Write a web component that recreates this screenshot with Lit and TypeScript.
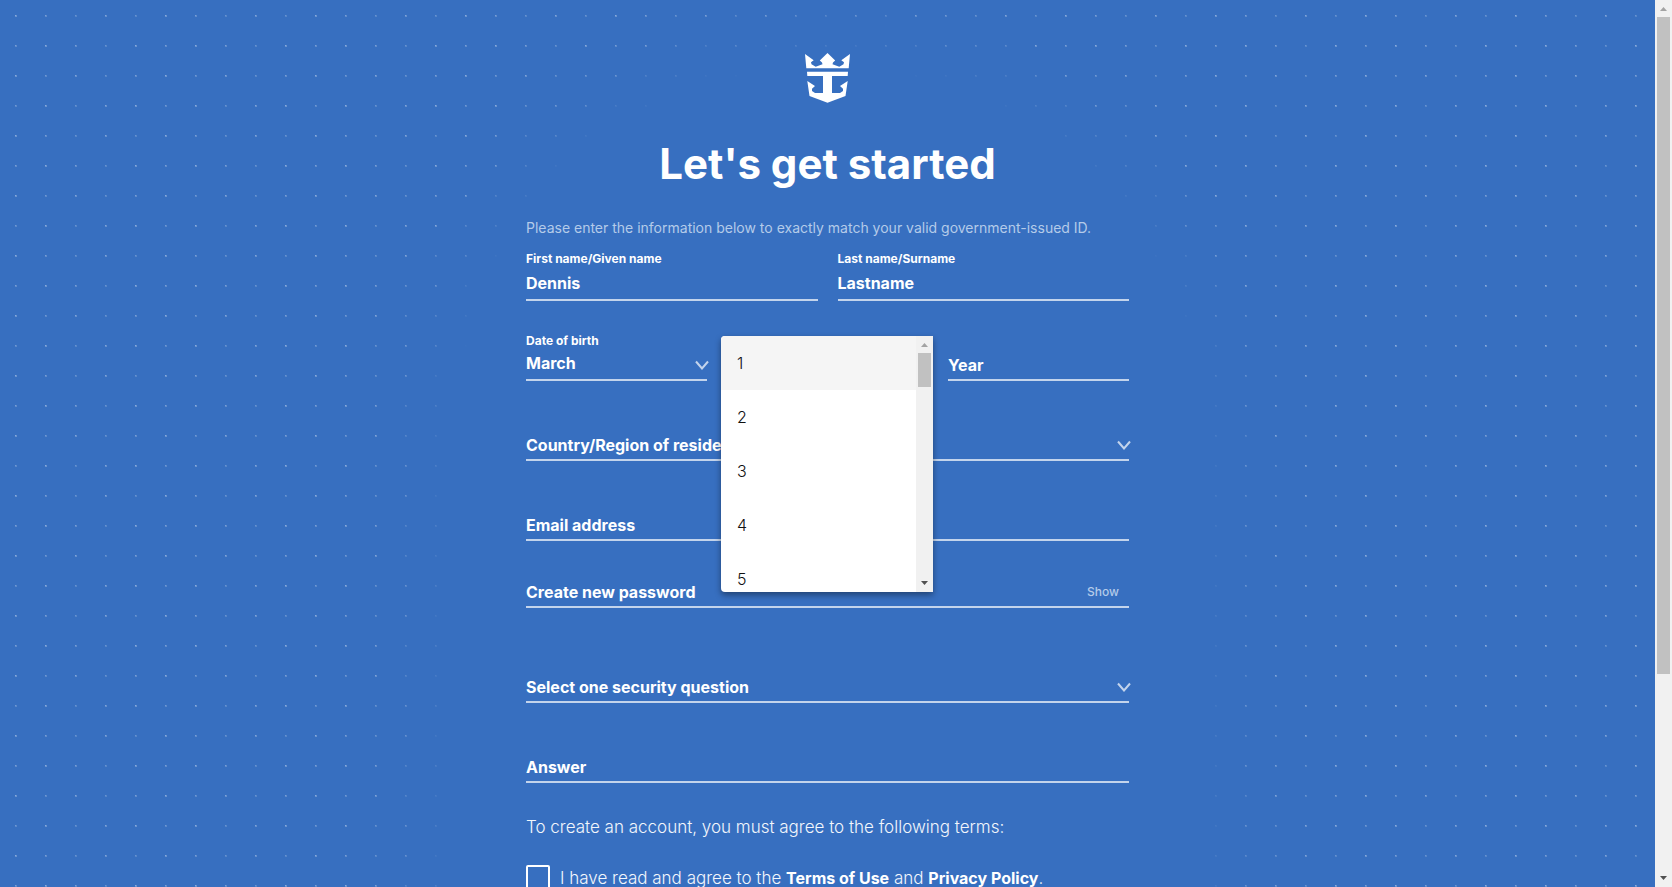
import { LitElement, html, css, svg, nothing } from "lit";
import { customElement } from "lit/decorators.js";

const chevron = svg`<svg class="chevron" viewBox="0 0 14 10" aria-hidden="true"><path d="M1 1.500 7 8.500 13 1.500" fill="none" stroke="currentColor" stroke-width="2"/></svg>`;

// Brightness of each star in the repeating 5 x 4 tile behind the form.
const STARS = [
  [0.5, 0.4, 0.3, 0.45, 0.3],
  [0.4, 0.5, 0.4, 0.3, 0.5],
  [0.5, 0.35, 0.45, 0.3, 0.4],
  [0.35, 0.5, 0.3, 0.45, 0.5],
];

@customElement("app-root")
export class AppRoot extends LitElement {
  static styles = css`
    :host {
      display: block;
      font-family: Inter, "Liberation Sans", sans-serif;
      color: #fff;
    }
    * { box-sizing: border-box; }
    .page {
      display: grid;
      grid-template-columns: minmax(0, 1fr) 17px;
      height: 100vh;
      overflow: hidden;
      background: #376fc0;
    }
    .content { position: relative; overflow: hidden; }
    .dots {
      position: absolute;
      inset: 0;
      width: 100%;
      height: 100%;
      mask-image:
        radial-gradient(circle at 50% 100%, transparent 370px, #000 450px),
        linear-gradient(90deg, #000 calc(50% - 450px), transparent calc(50% - 370px), transparent calc(50% + 370px), #000 calc(50% + 450px));
      mask-size: 100% 440px, 100% calc(100% - 440px);
      mask-position: 0 0, 0 440px;
      mask-repeat: no-repeat;
    }
    .form {
      position: relative;
      width: 603px;
      max-width: 100%;
      margin: 0 auto;
      padding-top: 53px;
    }
    .logo { display: block; width: 45px; height: 50px; margin: 0 auto; }
    h1 {
      margin: 33px 0 0;
      font-size: 42px;
      line-height: 56px;
      font-weight: 700;
      text-align: center;
    }
    .intro {
      margin: 26px 0 0;
      font-size: 14px;
      line-height: 20px;
      color: #b4cbe9;
      white-space: nowrap;
    }
    .row { display: grid; column-gap: 20px; }
    .names { grid-template-columns: 1fr 1fr; margin-top: 12px; }
    .birth { grid-template-columns: repeat(3, 1fr); column-gap: 30px; position: relative; }
    .field {
      position: relative;
      display: flex;
      flex-direction: column;
      justify-content: flex-end;
      height: 80px;
      border-bottom: 2px solid #c3d4ec;
    }
    .names .field { height: 51px; }
    .password { height: 67px; }
    .question { height: 95px; }
    .small { font-size: 12px; line-height: 16px; font-weight: 700; }
    .names .small { margin-bottom: 2px; }
    input, select {
      appearance: none;
      display: block;
      width: 100%;
      height: 30px;
      margin: 0;
      padding: 2px 0 0;
      border: 0;
      border-radius: 0;
      outline: 0;
      background: none;
      color: #fff;
      font: 700 16px/24px Inter, "Liberation Sans", sans-serif;
    }
    .small + input, .small + select { padding: 0 0 2px; }
    input::placeholder { color: #fff; opacity: 1; }
    .hidden {
      position: absolute;
      width: 1px;
      height: 1px;
      overflow: hidden;
      clip-path: inset(50%);
    }
    .chevron { position: absolute; right: -2px; bottom: 9px; width: 14px; height: 10px; color: #c3d4ec; pointer-events: none; }
    .show {
      position: absolute;
      right: 10px;
      bottom: 4px;
      padding: 0;
      border: 0;
      background: none;
      color: #b4cbe9;
      font: 500 12px/20px Inter, "Liberation Sans", sans-serif;
    }
    .menu {
      position: absolute;
      z-index: 2;
      top: 35px;
      left: 195px;
      display: grid;
      grid-template-columns: 1fr 17px;
      width: 212px;
      height: 256px;
      overflow: hidden;
      border-radius: 4px 0 0 4px;
      background: #fff;
      box-shadow: 0 3px 6px rgba(0, 0, 0, 0.4);
    }
    .options { margin: 0; padding: 0; list-style: none; overflow: hidden; height: 256px; }
    .option {
      height: 54px;
      padding: 0 16px;
      color: #111;
      font-size: 16px;
      font-weight: 300;
      line-height: 54px;
    }
    .option.active { background: #f5f5f5; }
    .bar {
      display: flex;
      flex-direction: column;
      align-items: center;
      height: 100%;
      background: #f1f1f1;
    }
    .arrow { display: block; width: 17px; height: 17px; flex: none; }
    .track { flex: 1; width: 13px; }
    .thumb { background: #c1c1c1; }
    .page > .bar .thumb { height: 77%; }
    .menu .thumb { height: 34px; }
    .terms, .check { font-size: 17px; font-weight: 300; color: #f2f6fc; }
    .terms { margin: 32px 0 0; line-height: 24px; }
    .check { display: flex; align-items: flex-start; gap: 10px; margin-top: 26px; line-height: 26px; white-space: nowrap; }
    .box { flex: none; width: 24px; height: 24px; padding: 0; border: 2px solid #fff; border-radius: 2px; }
    a { color: #fff; font-size: 16px; font-weight: 700; text-decoration: none; }
  `;

  private scrollbar() {
    return html`<div class="bar" aria-hidden="true">
      <svg class="arrow" viewBox="0 0 17 17"><path fill="#a3a3a3" d="M5 11h7L8.500 7z"/></svg>
      <div class="track"><div class="thumb"></div></div>
      <svg class="arrow" viewBox="0 0 17 17"><path fill="#505050" d="M5 6h7L8.500 10z"/></svg>
    </div>`;
  }

  private stars() {
    return html`<svg class="dots" aria-hidden="true">
      <defs>
        <pattern id="stars" width="150" height="120" patternUnits="userSpaceOnUse">
          ${STARS.map((line, y) => line.map((level, x) => svg`<g fill="#fff" opacity=${level} transform="translate(${15 + x * 30} ${15 + y * 30})"><path d="M0 0h2v2h-2z" opacity=".5"/><path d="M0 0h1v1h-1z" opacity=".7"/></g>`))}
        </pattern>
      </defs>
      <rect width="100%" height="100%" fill="url(#stars)"/>
    </svg>`;
  }

  private textField(id: string, label: string, type = "text", extra: unknown = nothing, cls = "") {
    return html`<div class="field ${cls}">
      <label class="hidden" for=${id}>${label}</label>
      <input id=${id} type=${type} placeholder=${label} />${extra}
    </div>`;
  }

  private selectField(id: string, label: string, cls = "") {
    return html`<div class="field ${cls}">
      <select id=${id} aria-label=${label}><option>${label}</option></select>${chevron}
    </div>`;
  }

  render() {
    return html`<div class="page">
      <main class="content">
        ${this.stars()}
        <form class="form">
          <svg class="logo" viewBox="0 0 45 50" role="img" aria-label="Crown and anchor">
            <path fill="#fff" d="M0 1 8.700 7.300 6 9.300 6.500 11.300 10.700 13.700 17.500 11.200 17 9.500 14.800 7.500 22.500 0 30.200 7.500 28 9.500 27.500 11.200 34.300 13.700 38.500 11.300 39 9.300 36.300 7.300 45 1 43.700 15.300H1.300zM2 18.700H43L42.700 23H27V40H35L38 38 38 35.700 35 33 42.700 28 40.500 43 22.500 49.800 4.500 43 2.300 28 10 33 7 35.700 7 38 10 40H18V23H2.300z"/>
          </svg>
          <h1>Let's get started</h1>
          <p class="intro">Please enter the information below to exactly match your valid government-issued ID.</p>
          <div class="row names">
            <div class="field"><label class="small" for="first">First name/Given name</label><input id="first" .value=${"Dennis"} /></div>
            <div class="field"><label class="small" for="last">Last name/Surname</label><input id="last" .value=${"Lastname"} /></div>
          </div>
          <div class="row birth">
            <div class="field"><label class="small" for="month">Date of birth</label><select id="month"><option>March</option></select>${chevron}</div>
            <div class="field"></div>
            ${this.textField("year", "Year")}
            <div class="menu">
              <ul class="options" role="listbox" aria-label="Day">
                ${[1, 2, 3, 4, 5].map((n) => html`<li class="option ${n === 1 ? "active" : ""}" role="option" aria-selected=${n === 1}>${n}</li>`)}
              </ul>
              ${this.scrollbar()}
            </div>
          </div>
          ${this.selectField("country", "Country/Region of residence")}
          ${this.textField("email", "Email address", "email")}
          ${this.textField("password", "Create new password", "password", html`<button class="show" type="button">Show</button>`, "password")}
          ${this.selectField("question", "Select one security question", "question")}
          ${this.textField("answer", "Answer")}
          <p class="terms">To create an account, you must agree to the following terms:</p>
          <div class="check">
            <input class="box" id="agree" type="checkbox" />
            <label for="agree">I have read and agree to the <a href="#terms">Terms of Use</a> and <a href="#privacy">Privacy Policy</a>.</label>
          </div>
        </form>
      </main>
      ${this.scrollbar()}
    </div>`;
  }
}
